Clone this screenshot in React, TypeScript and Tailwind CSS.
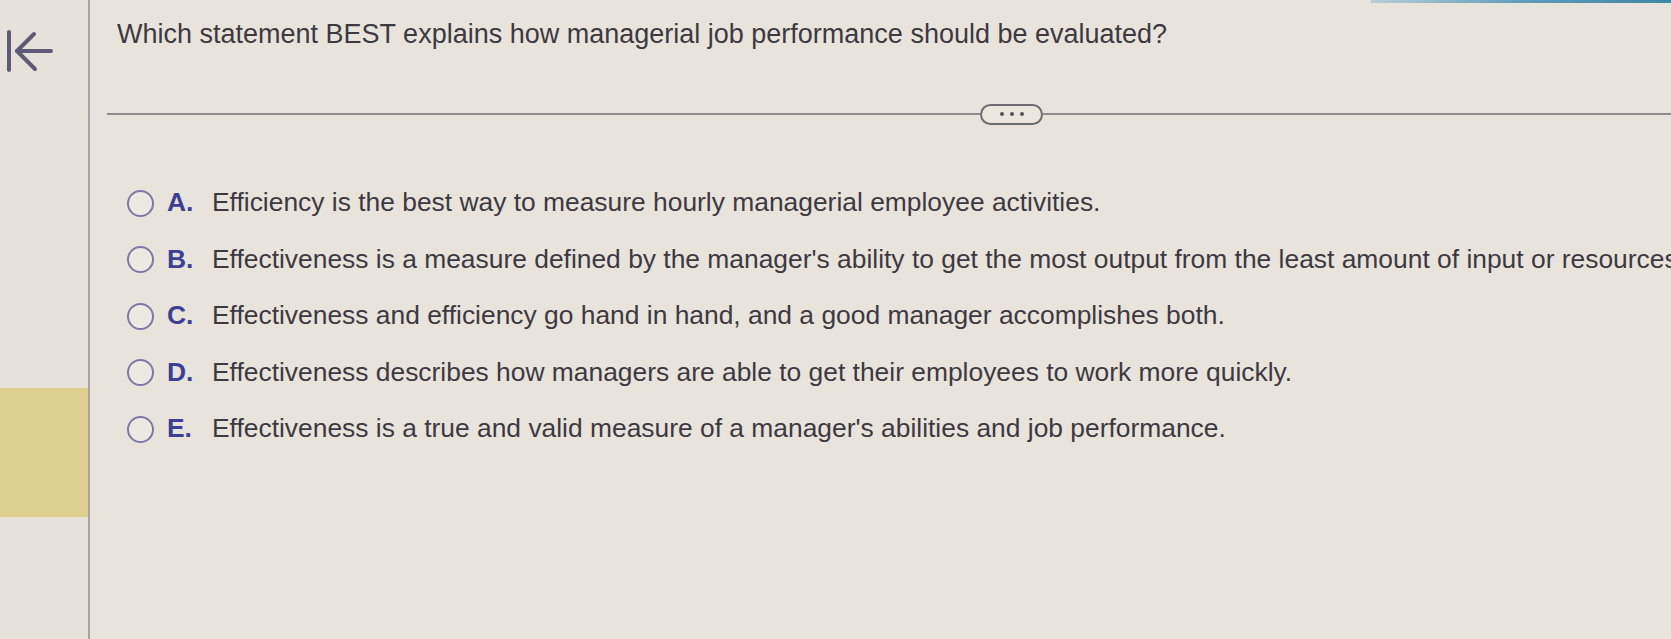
import React from "react";

const options = [
  { letter: "A.", text: "Efficiency is the best way to measure hourly managerial employee activities." },
  {
    letter: "B.",
    text: "Effectiveness is a measure defined by the manager's ability to get the most output from the least amount of input or resources.",
  },
  { letter: "C.", text: "Effectiveness and efficiency go hand in hand, and a good manager accomplishes both." },
  { letter: "D.", text: "Effectiveness describes how managers are able to get their employees to work more quickly." },
  { letter: "E.", text: "Effectiveness is a true and valid measure of a manager's abilities and job performance." },
];

function BackIcon() {
  return (
    <svg width="50" height="44" viewBox="0 0 50 44" fill="none" stroke="#5f5a78" strokeWidth="4" strokeLinecap="round" strokeLinejoin="round">
      <path d="M5 3v38" />
      <path d="M47 22H13" />
      <path d="M30 5L13 22l18 18" />
    </svg>
  );
}

export default function App() {
  return (
    <div
      className="relative flex h-[639px] w-[1671px] overflow-hidden bg-[#e8e4dc] text-[#3d3943]"
      style={{ fontFamily: '"Liberation Sans", Arial, sans-serif' }}
    >
      <div className="absolute right-0 top-0 h-[3px] w-[300px] bg-linear-to-r from-[#b9cdd6] via-[#5f9db8] to-[#3b87a7]" />

      <aside className="flex w-[90px] shrink-0 flex-col border-r-2 border-[#a7a3a6] bg-[#e6e2da]">
        <div className="pl-[4px] pt-[29px]">
          <BackIcon />
        </div>
        <div className="mt-[315px] h-[129px] bg-[#dccf8f]" />
      </aside>

      <main className="flex-1 pl-[17px] pt-[18px]">
        <h1 className="ml-[10px] text-[27px] leading-[32px]">
          Which statement BEST explains how managerial job performance should be evaluated?
        </h1>

        <div className="mt-[54px] flex h-[20px] items-center">
          <div className="h-[2px] w-[873px] bg-[#8f8b92]" />
          <button
            type="button"
            className="flex h-[21px] w-[63px] shrink-0 items-center justify-center gap-[6px] rounded-full border-2 border-[#6e6b72] bg-[#ebe7df]"
          >
            <span className="h-[4px] w-[4px] rounded-full bg-[#55525b]" />
            <span className="h-[4px] w-[4px] rounded-full bg-[#55525b]" />
            <span className="h-[4px] w-[4px] rounded-full bg-[#55525b]" />
          </button>
          <div className="h-[2px] flex-1 bg-[#8f8b92]" />
        </div>

        <div className="mt-[51px] flex flex-col pl-[20px]">
          {options.map((o) => (
            <label key={o.letter} className="flex h-[56.5px] items-center whitespace-nowrap">
              <span className="h-[27px] w-[27px] shrink-0 rounded-full border-[2.5px] border-[#7c79a6] bg-[#ece8e2]" />
              <span className="ml-[13px] w-[45px] shrink-0 text-[26.4px] font-bold text-[#3c3f98]">{o.letter}</span>
              <span className="text-[26.4px]">{o.text}</span>
            </label>
          ))}
        </div>
      </main>
    </div>
  );
}
